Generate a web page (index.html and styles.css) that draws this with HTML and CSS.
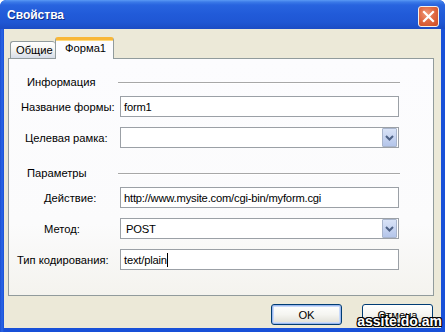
FILE: index.html
```html
<!DOCTYPE html>
<html lang="ru">
<head>
<meta charset="utf-8">
<title>Свойства</title>
<link rel="stylesheet" href="styles.css">
</head>
<body>
<div class="window">
  <div class="titlebar">
    <span class="title">Свойства</span>
    <span class="close" aria-label="Закрыть">
      <svg width="13" height="13" viewBox="0 0 13 13"><path d="M2 2 L11 11 M11 2 L2 11" stroke="#fff" stroke-width="2.2" stroke-linecap="square"/></svg>
    </span>
  </div>
  <div class="client">
    <div class="tabs">
      <div class="tab">Общие</div>
      <div class="tab active">Форма1</div>
    </div>
    <div class="pane">
      <div class="group"><span class="group-title">Информация</span><span class="rule"></span></div>
      <div class="row"><span class="label l-name">Название формы:</span><div class="field">form1</div></div>
      <div class="row"><span class="label l-frame">Целевая рамка:</span><div class="field select"><span class="value"></span><span class="drop"><svg width="9" height="6" viewBox="0 0 9 6"><path d="M1 1 L4.5 4.5 L8 1" fill="none" stroke="#4d6185" stroke-width="2"/></svg></span></div></div>
      <div class="group"><span class="group-title">Параметры</span><span class="rule"></span></div>
      <div class="row"><span class="label l-action">Действие:</span><div class="field">http://www.mysite.com/cgi-bin/myform.cgi</div></div>
      <div class="row"><span class="label l-method">Метод:</span><div class="field select"><span class="value">POST</span><span class="drop"><svg width="9" height="6" viewBox="0 0 9 6"><path d="M1 1 L4.5 4.5 L8 1" fill="none" stroke="#4d6185" stroke-width="2"/></svg></span></div></div>
      <div class="row"><span class="label l-enc">Тип кодирования:</span><div class="field">text/plain<span class="caret"></span></div></div>
    </div>
    <div class="buttons">
      <button class="btn default">OK</button>
      <button class="btn">Отмена</button>
    </div>
  </div>
  <div class="watermark">assite.do.am</div>
</div>
</body>
</html>
```
FILE: styles.css
```css
* { box-sizing: border-box; }
html, body { margin: 0; padding: 0; background: #ffffff; }
body { width: 445px; height: 332px; overflow: hidden; font-family: "Liberation Sans", Arial, sans-serif; font-size: 11.2px; color: #000; }

.window {
  position: relative;
  width: 445px;
  height: 332px;
  background: linear-gradient(90deg, #1c4fd0 0, #2a66e6 2px, #1850d8 4px);
  border-radius: 6px 6px 0 0;
  display: flex;
  flex-direction: column;
  overflow: hidden;
}
.titlebar {
  height: 29px;
  flex: none;
  display: flex;
  align-items: center;
  justify-content: space-between;
  padding: 0 6px 0 7px;
  background: linear-gradient(180deg, #5a9af5 0, #3b7ae8 2px, #2864df 5px, #215bd9 14px, #1f57d4 22px, #1b4cc4 29px);
  border-radius: 6px 6px 0 0;
}
.title { color: #fff; font-weight: bold; font-size: 12px; letter-spacing: 0; text-shadow: 1px 1px 0 #0f2f8a; margin-top: 1px; }
.close {
  width: 21px; height: 21px;
  margin-top: 3px;
  display: flex; align-items: center; justify-content: center;
  border: 1px solid #f3f0ec;
  border-radius: 3px;
  background: radial-gradient(circle at 40% 35%, #f09a7a 0, #e06a44 45%, #cd4a22 100%);
}

.client {
  flex: 1;
  margin: 0 4px 4px 4px;
  background: #ece9d8;
  display: flex;
  flex-direction: column;
}

.tabs {
  display: flex;
  align-items: flex-end;
  height: 21px;
  margin: 8px 0 0 6px;
  position: relative;
  z-index: 1;
}
.tab {
  height: 17px;
  padding: 0 0 0 5px;
  width: 45px;
  border: 1px solid #919b9c;
  border-bottom: none;
  border-right: none;
  border-radius: 3px 3px 0 0;
  background: linear-gradient(180deg, #ffffff 0, #f4f4f0 50%, #d6dde9 100%);
  line-height: 16px;
  white-space: nowrap;
}
.tab.active {
  height: 22px;
  width: 59px;
  margin-bottom: -1px;
  padding-left: 9px;
  border-top: 3px solid #f8b738;
  border-right: 1px solid #919b9c;
  background: #fcfcfe;
  line-height: 17px;
  box-shadow: inset 0 1px 0 #ffd87a;
}

.pane {
  margin-left: 4px;
  width: 426px;
  height: 238px;
  border: 1px solid #919b9c;
  background: linear-gradient(180deg, #fcfcfe 0, #fbfbfc 70%, #f4f3ee 100%);
  padding-top: 16px;
  display: flex;
  flex-direction: column;
}

.group { height: 14px; display: flex; align-items: center; padding-left: 18px; }
.group-title { width: 91px; flex: none; }
.rule { width: 282px; height: 2px; border-top: 1px solid #a7a7a7; border-bottom: 1px solid #ffffff; margin-top: 1px; }

.row { height: 21px; display: flex; align-items: center; margin-top: 10px; }
.group + .row { margin-top: 7px; }
.row + .group { margin-top: 18px; }

.label { width: 111px; flex: none; white-space: nowrap; }
.l-name { padding-left: 12px; }
.l-frame { padding-left: 16px; }
.l-action { padding-left: 35px; }
.l-method { padding-left: 35px; }
.l-enc { padding-left: 8px; }

.field {
  width: 279px;
  height: 21px;
  border: 1px solid #9ba0a6;
  background: #fff;
  padding-left: 3px;
  display: flex;
  align-items: center;
  white-space: nowrap;
  letter-spacing: -0.2px;
}
.select { justify-content: space-between; padding-right: 1px; }
.select .value { padding-left: 2px; }
.drop {
  width: 15px; height: 19px;
  border: 1px solid #a9b5cc;
  border-radius: 1px;
  background: linear-gradient(180deg, #d9e3f7 0, #c3d1ef 60%, #b4c5ea 100%);
  display: flex; align-items: center; justify-content: center;
}
.caret { display: inline-block; width: 1px; height: 14px; background: #000; margin-left: 0; }

.buttons {
  display: flex;
  justify-content: flex-end;
  gap: 20px;
  margin-top: 8px;
  padding-right: 8px;
}
.btn {
  width: 71px;
  height: 21px;
  border: 1px solid #003c74;
  border-radius: 3px;
  background: linear-gradient(180deg, #ffffff 0, #f5f5f1 50%, #e3e2da 90%, #d6d0c5 100%);
  font-family: "Liberation Sans", Arial, sans-serif;
  font-size: 11.2px;
  color: #000;
  padding: 0;
}
.btn.default { box-shadow: inset 0 0 0 1px #9bb8ee, inset 0 0 0 2px #c9dafa; }

.watermark {
  position: absolute;
  right: 3px;
  bottom: 3px;
  font-family: "Liberation Sans", sans-serif;
  font-weight: bold;
  font-size: 14px;
  line-height: 16px;
  color: #fff;
  letter-spacing: 0;
  text-shadow: 1px 0 0 #000, -1px 0 0 #000, 0 1px 0 #000, 0 -1px 0 #000, 1px 1px 0 #000, -1px -1px 0 #000, 1px -1px 0 #000, -1px 1px 0 #000;
}
```
